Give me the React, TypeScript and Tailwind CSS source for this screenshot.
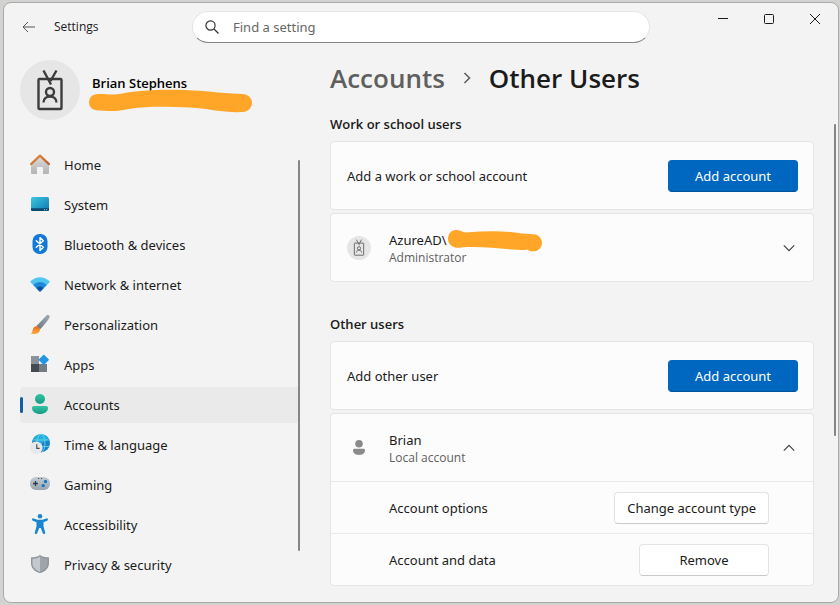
import React, { useState } from "react";

type IconProps = { className?: string };

type NavItem = {
  label: string;
  icon: React.FC;
};

const HomeIcon: React.FC = () => (
  <svg viewBox="0 0 20 20" className="h-5 w-5 shrink-0 overflow-visible" aria-hidden="true">
    <defs>
      <linearGradient id="home-wall" x1="0" y1="0" x2="0" y2="1">
        <stop offset="0" stopColor="#dedede" />
        <stop offset="1" stopColor="#b3b3b3" />
      </linearGradient>
      <linearGradient id="home-roof" x1="0" y1="0" x2="1" y2="1">
        <stop offset="0" stopColor="#e59545" />
        <stop offset="1" stopColor="#b9572a" />
      </linearGradient>
    </defs>
    <path d="M1 9 10 1l9 8v9a1 1 0 0 1-1 1h-5v-6.500a.5.500 0 0 0-.5-.5h-5a.5.500 0 0 0-.5.500V19H2a1 1 0 0 1-1-1z" fill="url(#home-wall)" />
    <path d="M1.200 9 10 .7 18.800 9" fill="none" stroke="url(#home-roof)" strokeWidth="2.400" strokeLinecap="round" strokeLinejoin="round" />
  </svg>
);

const SystemIcon: React.FC = () => (
  <svg viewBox="0 0 20 20" className="h-5 w-5 shrink-0 overflow-visible" aria-hidden="true">
    <defs>
      <linearGradient id="system-screen" x1="0" y1="0" x2="1" y2="1">
        <stop offset="0" stopColor="#3bc9de" />
        <stop offset="1" stopColor="#0f78b4" />
      </linearGradient>
    </defs>
    <rect x="1" y="2" width="18" height="14" rx="1.500" fill="url(#system-screen)" />
    <path d="M1 13.300h18v1.200a1.500 1.500 0 0 1-1.500 1.500h-15A1.500 1.500 0 0 1 1 14.500z" fill="#0b4a70" />
    <path d="M14 14.200h1v1h-1zM16.200 14.200h1v1h-1z" fill="#b5dcec" />
  </svg>
);

const BluetoothIcon: React.FC = () => (
  <svg viewBox="0 0 20 20" className="h-5 w-5 shrink-0 overflow-visible" aria-hidden="true">
    <rect x="2.500" y="-1" width="15" height="20" rx="7" fill="#1379d8" />
    <path d="m6.300 5.800 7 6.400L10 15.400V2.600l3.300 3.200-7 6.400" fill="none" stroke="#fff" strokeWidth="1.400" strokeLinejoin="round" strokeLinecap="round" />
  </svg>
);

const NetworkIcon: React.FC = () => (
  <svg viewBox="0 0 20 20" className="h-5 w-5 shrink-0 overflow-visible" aria-hidden="true">
    <path d="M.6 7.400Q0 6.700.7 6.100C6 .9 14 .9 19.300 6.100q.7.600.1 1.300L10.600 16.300q-.6.500-1.200 0z" fill="#53c5f0" />
    <path d="M3.300 10.100c3.800-4 9.600-4 13.400 0l-6.100 6.200q-.6.500-1.200 0z" fill="#1c8ad8" />
    <path d="M6.300 13.100c2.100-2.200 5.300-2.200 7.400 0l-3.100 3.200q-.6.500-1.200 0z" fill="#0d53a0" />
  </svg>
);

const BrushIcon: React.FC = () => (
  <svg viewBox="0 0 20 20" className="h-5 w-5 shrink-0 overflow-visible" aria-hidden="true">
    <defs>
      <linearGradient id="brush-handle" x1="1" y1="0" x2="0" y2="1">
        <stop offset="0" stopColor="#a3adb5" />
        <stop offset="1" stopColor="#68747d" />
      </linearGradient>
      <linearGradient id="brush-tip" x1="0" y1="0" x2="0" y2="1">
        <stop offset="0" stopColor="#e8681e" />
        <stop offset="1" stopColor="#fbb040" />
      </linearGradient>
    </defs>
    <path d="M6.500 11 16.800.200c1.200-1.100 3.500.4 2.800 2.400-.5 1.500-6.700 9.200-9.700 12z" fill="url(#brush-handle)" />
    <path d="M.7 18.700c2-.9 1.400-3 2.500-5.200 1.100-2.300 3.500-2.900 5.300-1.500 1.900 1.600 1.900 3.900.2 5.400-2 1.900-5.500 2-8 1.300z" fill="url(#brush-tip)" />
  </svg>
);

const AppsIcon: React.FC = () => (
  <svg viewBox="0 0 20 20" className="h-5 w-5 shrink-0 overflow-visible" aria-hidden="true">
    <path d="M1 1h8v8H1z" fill="#8a939b" />
    <path d="M1 9h8v8H1z" fill="#444b51" />
    <path d="M9 9h8v8H9z" fill="#737c84" />
    <rect x="10" y="1" width="7.600" height="7.600" rx=".7" fill="#2196e3" transform="rotate(45 13.800 4.800)" />
  </svg>
);

const AccountsIcon: React.FC = () => (
  <svg viewBox="0 0 20 20" className="h-5 w-5 shrink-0 overflow-visible" aria-hidden="true">
    <defs>
      <linearGradient id="accounts-fill" x1="0" y1="0" x2="0" y2="1">
        <stop offset="0" stopColor="#30c5a3" />
        <stop offset="1" stopColor="#199a84" />
      </linearGradient>
    </defs>
    <circle cx="10" cy="4" r="5" fill="url(#accounts-fill)" />
    <path d="M4 11h12c1.300 0 2 .8 2 2 0 3.800-3.700 6-8 6s-8-2.200-8-6c0-1.200.7-2 2-2z" fill="url(#accounts-fill)" />
  </svg>
);

const TimeIcon: React.FC = () => (
  <svg viewBox="0 0 20 20" className="h-5 w-5 shrink-0 overflow-visible" aria-hidden="true">
    <circle cx="11" cy="8.200" r="9" fill="#1a84c9" />
    <path d="M11-.8a9 9 0 0 1 8 5L11 8.200 3 4.200a9 9 0 0 1 8-5z" fill="#22b0dd" />
    <g fill="none" stroke="#74d7ed" strokeWidth=".8">
      <ellipse cx="11" cy="8.200" rx="4" ry="9" />
      <path d="M2.800 5h16.400M2.800 11.500h16.400" />
    </g>
    <circle cx="6.200" cy="12.800" r="6.400" fill="#e6e8ea" />
    <path d="M6.800 9.200v4.200h2.900" fill="none" stroke="#47515a" strokeWidth="1.200" />
  </svg>
);

const GamingIcon: React.FC = () => (
  <svg viewBox="0 0 20 20" className="h-5 w-5 shrink-0 overflow-visible" aria-hidden="true">
    <defs>
      <linearGradient id="gaming-pad" x1="0" y1="0" x2="0" y2="1">
        <stop offset="0" stopColor="#c4cdd4" />
        <stop offset="1" stopColor="#98a3ac" />
      </linearGradient>
    </defs>
    <rect x="0" y="2" width="20" height="13" rx="6" fill="url(#gaming-pad)" />
    <path d="M5.500 6v5M3 8.500h5" stroke="#333c44" strokeWidth="1.300" />
    <path d="M8 3h1.200v1H8zM11 3h1.200v1H11z" fill="#46515b" />
    <circle cx="15.500" cy="6.500" r="1.700" fill="#1976c4" />
    <circle cx="13.200" cy="10.600" r="1.700" fill="#1976c4" />
  </svg>
);

const AccessibilityIcon: React.FC = () => (
  <svg viewBox="0 0 20 20" className="h-5 w-5 shrink-0 overflow-visible" aria-hidden="true">
    <g fill="#1a86cf">
      <circle cx="10" cy="1.300" r="2.300" />
      <path d="M3.600 3.400 7.500 4.800h5l3.900-1.400c1.600-.5 2.200 1.700.8 2.300L13.500 7.300v3.900l1.700 6.200c.4 1.600-1.900 2.200-2.500.7L10.800 13H9.200l-1.900 5.100c-.6 1.500-2.900.9-2.500-.7l1.700-6.200V7.300L2.800 5.700c-1.400-.6-.8-2.800.8-2.300z" />
    </g>
  </svg>
);

const ShieldIcon: React.FC = () => (
  <svg viewBox="0 0 20 20" className="h-5 w-5 shrink-0 overflow-visible" aria-hidden="true">
    <path d="M10 0c2.500 1.900 5.300 2.300 8.200 2.300q.8 0 .8.800V8c0 5-3.500 8.300-8.400 10q-.6.200-1.200 0C4.500 16.300 1 13 1 8V3.100q0-.8.800-.8C4.700 2.300 7.500 1.900 10 0z" fill="#8d949a" />
    <path d="M10 1.600v15.300C5.400 15 2.400 12.200 2.400 8V3.900C5.500 3.700 7.900 3.100 10 1.600z" fill="#c3c8cc" />
    <path d="M10 1.600v15.300c4.600-1.900 7.600-4.700 7.600-8.900V3.900c-3.100-.2-5.500-.8-7.600-2.300z" fill="#9ea5ab" />
  </svg>
);

const BadgeIcon: React.FC<IconProps> = ({ className }) => (
  <svg viewBox="0 0 28 42" className={className} fill="none" stroke="currentColor" strokeWidth="2.400" aria-hidden="true">
    <rect x="2.500" y="10" width="23" height="30" rx="1" />
    <path d="M7.500 1.500 15 15.500M20.500 1.500 14.500 12" />
    <circle cx="14" cy="23" r="4" />
    <path d="M7.500 33.500c0-8 13-8 13 0" />
  </svg>
);

const UserIcon: React.FC = () => (
  <svg viewBox="0 0 12 15" className="h-[15px] w-3" fill="#8a8a8a" aria-hidden="true">
    <circle cx="6" cy="3.800" r="3.800" />
    <path d="M1.500 8.800h9c1 0 1.500.6 1.500 1.500 0 2.900-2.600 4.700-6 4.700s-6-1.800-6-4.700c0-.9.500-1.500 1.500-1.500z" />
  </svg>
);

const Chevron: React.FC<{ open: boolean }> = ({ open }) => (
  <svg viewBox="0 0 12 12" className="h-3 w-3" fill="none" stroke="#404040" strokeWidth="1.200" aria-hidden="true">
    <path d={open ? "M.8 8.600 6 3.400l5.200 5.200" : "M.8 3.400 6 8.600l5.200-5.200"} />
  </svg>
);

const NAV_ITEMS: NavItem[] = [
  { label: "Home", icon: HomeIcon },
  { label: "System", icon: SystemIcon },
  { label: "Bluetooth & devices", icon: BluetoothIcon },
  { label: "Network & internet", icon: NetworkIcon },
  { label: "Personalization", icon: BrushIcon },
  { label: "Apps", icon: AppsIcon },
  { label: "Accounts", icon: AccountsIcon },
  { label: "Time & language", icon: TimeIcon },
  { label: "Gaming", icon: GamingIcon },
  { label: "Accessibility", icon: AccessibilityIcon },
  { label: "Privacy & security", icon: ShieldIcon },
];

const TitleBar: React.FC = () => (
  <header className="flex items-start">
    <div className="flex w-[188px] shrink-0 items-center pt-2">
      <button type="button" aria-label="Back" className="flex h-8 w-[50px] items-center justify-center">
        <svg viewBox="0 0 14 12" className="h-3 w-[14px]" fill="none" stroke="#555" aria-hidden="true">
          <path d="M13 6H1M6 1 1 6l5 5" />
        </svg>
      </button>
      <span className="font-['Open_Sans',sans-serif] text-[12px] leading-4">Settings</span>
    </div>
    <div className="mt-2 flex h-8 flex-1 items-center gap-[14px] rounded-full border border-[#e5e5e5] border-b-[#858585] bg-white px-3">
      <svg viewBox="0 0 14 14" className="h-[14px] w-[14px] shrink-0" fill="none" stroke="#333" strokeWidth="1.200" aria-hidden="true">
        <circle cx="5.500" cy="5.500" r="4.600" />
        <path d="m9 9 4.500 4.500" />
      </svg>
      <input
        type="text"
        aria-label="Find a setting"
        placeholder="Find a setting"
        className="min-w-0 flex-1 bg-transparent text-[13px] leading-5 outline-none placeholder:text-[#666]"
      />
    </div>
    <div className="flex shrink-0 pl-[50px]">
      <button type="button" aria-label="Minimize" className="flex h-8 w-[46px] items-center justify-center">
        <svg viewBox="0 0 10 10" className="h-[10px] w-[10px]" stroke="#1a1a1a" aria-hidden="true">
          <path d="M0 4.500h10" />
        </svg>
      </button>
      <button type="button" aria-label="Maximize" className="flex h-8 w-[46px] items-center justify-center">
        <svg viewBox="0 0 10 10" className="h-[10px] w-[10px]" fill="none" stroke="#1a1a1a" aria-hidden="true">
          <rect x=".5" y=".5" width="9" height="9" rx="1" />
        </svg>
      </button>
      <button type="button" aria-label="Close" className="flex h-8 w-[46px] items-center justify-center">
        <svg viewBox="0 0 10 10" className="h-[10px] w-[10px]" stroke="#1a1a1a" aria-hidden="true">
          <path d="m0 0 10 10M10 0 0 10" />
        </svg>
      </button>
    </div>
  </header>
);

const Sidebar: React.FC = () => {
  const [active, setActive] = useState("Accounts");

  return (
    <aside className="w-[296px] shrink-0 pl-4 pt-[17px]">
      <div className="relative flex items-start gap-3">
        <div className="flex h-[60px] w-[60px] items-center justify-center rounded-full bg-[#e6e6e6] text-[#3c3c3c]">
          <BadgeIcon className="h-[42px] w-7" />
        </div>
        <p className="pt-[13px] font-['Open_Sans',sans-serif] text-[13px] leading-5 font-semibold text-black">Brian Stephens</p>
        <svg viewBox="0 0 166 24" className="absolute left-[67px] top-[29px] h-6 w-[166px]" aria-hidden="true">
          <path
            d="M8 5.500C16 4 24 7 35 4.500 58 0 88 0 113 1.800c14 1.200 28 3 43 3.200a9 9 0 0 1 0 18c-18 1-35-3.500-53-4.500-21-.8-43-1.500-63 1.800-10 2.700-20 1.700-32 .7a8 8 0 0 1 0-15.500z"
            fill="#ffa629"
          />
        </svg>
      </div>

      <div className="mt-[27px] flex items-start">
        <nav className="flex flex-1 flex-col gap-1">
          {NAV_ITEMS.map(({ label, icon: Icon }) => (
            <a
              key={label}
              href="#"
              onClick={() => setActive(label)}
              aria-current={active === label ? "page" : undefined}
              className={`relative flex h-9 items-center gap-[14px] rounded-l px-[10px] text-[13px] leading-5 ${
                active === label ? "bg-[#eaeaea]" : ""
              }`}
            >
              {active === label && <span className="absolute left-0 top-[10px] h-4 w-[3px] rounded-full bg-[#0f5ea8]" />}
              <Icon />
              {label}
            </a>
          ))}
        </nav>
        <div className="mt-[13px] h-[391px] w-[2px] rounded-full bg-[#858585]" />
      </div>
    </aside>
  );
};

const AddRow: React.FC<{ label: string }> = ({ label }) => (
  <div className="flex h-[69px] items-center justify-between rounded border border-[#e5e5e5] bg-[#fcfcfc] pl-4 pr-[15px]">
    <span className="text-[13px] leading-5">{label}</span>
    <button type="button" className="h-8 w-[130px] rounded border border-[#0067c0] border-b-[#00539c] bg-[#0067c0] text-[13px] leading-5 text-white">
      Add account
    </button>
  </div>
);

const OptionRow: React.FC<{ label: string; action: string }> = ({ label, action }) => (
  <div className="flex h-[52px] items-center justify-between border-t border-[#e9e9e9] pl-[58px] pr-11">
    <span className="text-[13px] leading-5">{label}</span>
    <button type="button" className="h-8 min-w-[130px] rounded border border-[#e3e3e3] border-b-[#cacaca] bg-white px-3 text-[13px] leading-5">
      {action}
    </button>
  </div>
);

const App: React.FC = () => {
  const [workOpen, setWorkOpen] = useState(false);
  const [localOpen, setLocalOpen] = useState(true);

  return (
    <div className="flex min-h-screen flex-col bg-[#d2d2d0] pt-[2px] pr-px pb-[2px] pl-[3px] font-['Noto_Sans','Open_Sans',sans-serif] text-[#1b1b1b]">
      <div className="flex flex-1 flex-col rounded-lg border border-[#aaa] bg-[#f3f3f3]">
        <TitleBar />
        <div className="flex flex-1">
          <Sidebar />

          <main className="min-w-0 flex-1 pl-[30px] pr-5 pt-[17px]">
            <h1 className="flex items-center font-['Open_Sans',sans-serif] text-[26px] leading-9 font-semibold">
              <a href="#" className="text-[#5f5f5f]">
                Accounts
              </a>
              <svg viewBox="0 0 8 12" className="mx-[18px] h-3 w-2" fill="none" stroke="#5f5f5f" strokeWidth="1.600" aria-hidden="true">
                <path d="m1.500 1 5 5-5 5" />
              </svg>
              Other Users
            </h1>

            <section className="mt-[18px]">
              <h2 className="mb-[7px] font-['Open_Sans',sans-serif] text-[13px] leading-5 font-semibold">Work or school users</h2>
              <div className="flex flex-col gap-[3px]">
                <AddRow label="Add a work or school account" />
                <button
                  type="button"
                  aria-expanded={workOpen}
                  onClick={() => setWorkOpen(!workOpen)}
                  className="relative flex h-[69px] items-center rounded border border-[#e5e5e5] bg-[#fcfcfc] pl-4 pr-[18px] text-left"
                >
                  <span className="flex h-6 w-6 items-center justify-center rounded-full bg-[#e6e6e6] text-[#6a6a6a]">
                    <BadgeIcon className="h-[17px] w-3" />
                  </span>
                  <span className="ml-[18px] flex-1">
                    <span className="block text-[13px] leading-5">AzureAD\</span>
                    <span className="block font-['Open_Sans',sans-serif] text-[12px] leading-4 text-[#606060]">Administrator</span>
                  </span>
                  <svg viewBox="0 0 96 22" className="absolute left-[116px] top-4 h-[22px] w-24" aria-hidden="true">
                    <path
                      d="M9 0c4 0 6 2 10 2.500C38 1 57 .5 75 3.500l11 .8a8.500 8.500 0 0 1 1 17c-3 .4-5-.2-7-1.700-3 1-6 .2-9 .2-20-1-38-4-57-2.300C8 19 1 15.500 1 9c0-5 3-9 8-9z"
                      fill="#ffa629"
                    />
                  </svg>
                  <Chevron open={workOpen} />
                </button>
              </div>
            </section>

            <section className="mt-8">
              <h2 className="mb-[7px] font-['Open_Sans',sans-serif] text-[13px] leading-5 font-semibold">Other users</h2>
              <div className="flex flex-col gap-[3px]">
                <AddRow label="Add other user" />
                <div className="rounded border border-[#e5e5e5] bg-[#fcfcfc]">
                  <button
                    type="button"
                    aria-expanded={localOpen}
                    onClick={() => setLocalOpen(!localOpen)}
                    className="flex h-[67px] w-full items-center pl-4 pr-[18px] text-left"
                  >
                    <span className="flex h-6 w-6 items-center justify-center">
                      <UserIcon />
                    </span>
                    <span className="ml-[18px] flex-1">
                      <span className="block text-[13px] leading-5">Brian</span>
                      <span className="block font-['Open_Sans',sans-serif] text-[12px] leading-4 text-[#606060]">Local account</span>
                    </span>
                    <Chevron open={localOpen} />
                  </button>
                  {localOpen && (
                    <>
                      <OptionRow label="Account options" action="Change account type" />
                      <OptionRow label="Account and data" action="Remove" />
                    </>
                  )}
                </div>
              </div>
            </section>
          </main>

          <div className="mr-[2px] mt-[81px] h-[312px] w-[2px] shrink-0 rounded-full bg-[#858585]" />
        </div>
      </div>
    </div>
  );
};

export default App;
